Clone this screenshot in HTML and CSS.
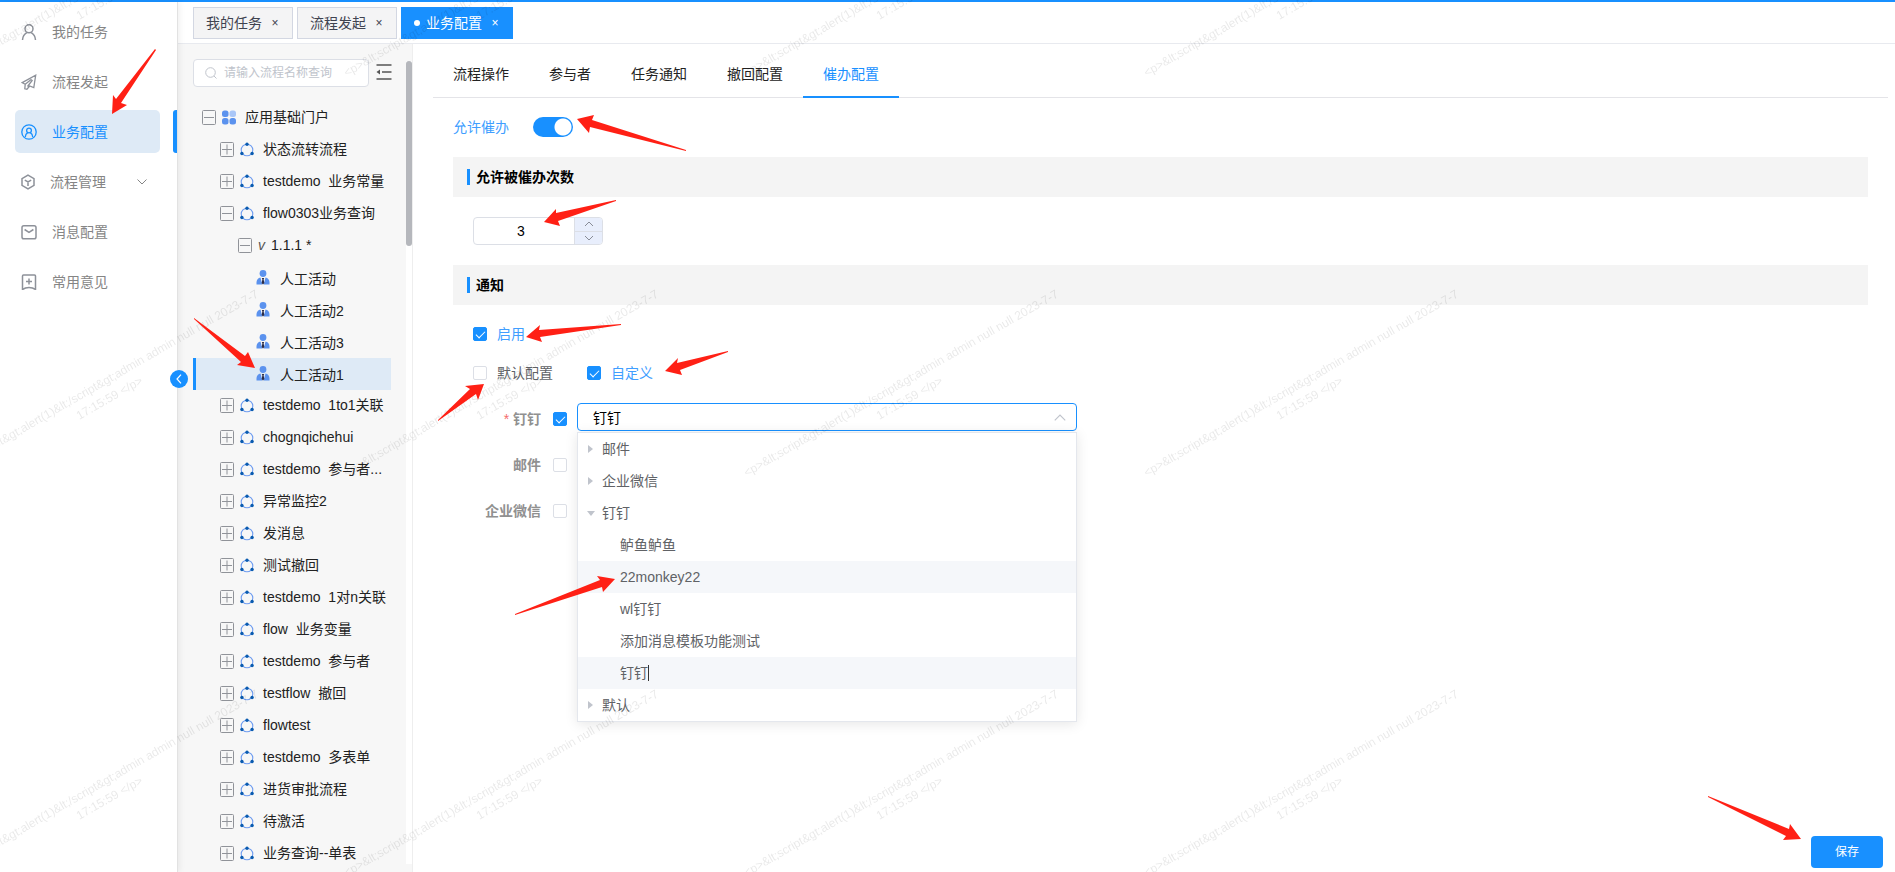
FILE: index.html
```html
<!DOCTYPE html>
<html lang="zh-CN">
<head>
    <meta charset="UTF-8">
    <meta name="viewport" content="width=device-width, initial-scale=1.0">
    <title>业务配置</title>
    <link rel="stylesheet" href="styles.css">
</head>
<body>
    <svg class="sprite" aria-hidden="true">
        <symbol id="plus" viewBox="0 0 14 15">
            <rect x="0.5" y="0.5" width="13" height="14" rx="1" fill="none" stroke="#909399"/>
            <path d="M2 7.5h10M7 2.5v10" stroke="#909399" fill="none"/>
        </symbol>
        <symbol id="minus" viewBox="0 0 14 15">
            <rect x="0.5" y="0.5" width="13" height="14" rx="1" fill="none" stroke="#909399"/>
            <path d="M2 7.5h10" stroke="#909399" fill="none"/>
        </symbol>
        <symbol id="flow" viewBox="0 0 14 14">
            <circle cx="7" cy="7.500" r="5.800" fill="none" stroke="#6f9df0" stroke-width="1.1"/>
            <circle cx="7" cy="1.800" r="1.700" fill="#0a5bb0"/>
            <circle cx="1.900" cy="11" r="1.700" fill="#0a5bb0"/>
            <circle cx="12.100" cy="11" r="1.700" fill="#0a5bb0"/>
        </symbol>
        <symbol id="person" viewBox="0 0 14 15">
            <circle cx="7" cy="3.500" r="3.400" fill="#5b92ee"/>
            <path d="M0.5 14.500v-2.500q0.500-4 4-4.500l1.800 7zM13.500 14.500v-2.500q-0.500-4-4-4.500l-1.800 7z" fill="#5b92ee"/>
            <path d="M5.800 8h2.400l-.6 1.600.8 3.400L7 14.500 5.600 13l.8-3.400z" fill="#2b2b45"/>
        </symbol>
    </svg>

    <div class="app">
        <nav class="sidebar">
            <a class="menu-item" href="#">
                <svg class="menu-icon" viewBox="0 0 16 16"><circle cx="8" cy="4.800" r="4"/><path d="M1.500 16c.2-3.600 1.600-5.800 4.300-7.400M14.500 16c-.2-3.600-1.600-5.800-4.300-7.400"/></svg>
                我的任务
            </a>
            <a class="menu-item" href="#">
                <svg class="menu-icon thin" viewBox="0 0 16 16"><path d="M1.200 8.600L14.700 1.200 12.800 13.600 8.700 12 5.900 15.200 3.800 14.800 4.200 10.300zM4.200 10.300l6.300-5M6.500 12.500L11.500 6"/></svg>
                流程发起
            </a>
            <a class="menu-item active" href="#">
                <svg class="menu-icon thin" viewBox="0 0 16 16"><circle cx="8" cy="8" r="7.200"/><circle cx="8" cy="6.500" r="2.400"/><path d="M4.300 13c.1-2.200.9-3.500 2.400-4.400M11.700 13c-.1-2.200-.9-3.500-2.400-4.400"/></svg>
                业务配置
            </a>
            <a class="menu-item submenu" href="#">
                <svg class="menu-icon" viewBox="0 0 16 16"><path d="M7 1.200l6 3.400v6.800l-6 3.400-6-3.400V4.600zM3.800 6.200L7 8l3.200-1.800M7 8v4"/></svg>
                流程管理
                <svg class="chevron" viewBox="0 0 10 6"><path d="M.5.5L5 5 9.500.5"/></svg>
            </a>
            <a class="menu-item" href="#">
                <svg class="menu-icon" viewBox="0 0 16 16"><rect x="1" y="1.700" width="14" height="13" rx="1.800"/><path d="M3.600 5.500L8 8.300l4.400-2.800"/></svg>
                消息配置
            </a>
            <a class="menu-item" href="#">
                <svg class="menu-icon" viewBox="0 0 16 16"><path d="M1.500 2q0-1 1-1h11q1 0 1 1v13.500l-3-1.500q-3.500-1-7 0l-3 1.500zM5 7.500h6M8 4.500v6"/></svg>
                常用意见
            </a>
            <button class="collapse" aria-label="收起菜单"><svg viewBox="0 0 6 10"><path d="M5 .7L1 5l4 4.300"/></svg></button>
        </nav>

        <div class="content">
            <div class="page-tabs">
                <button class="page-tab">我的任务<span class="close">×</span></button>
                <button class="page-tab">流程发起<span class="close">×</span></button>
                <button class="page-tab active"><span class="dot"></span>业务配置<span class="close">×</span></button>
            </div>

            <div class="columns">
                <aside class="tree-panel">
                    <div class="search-row">
                        <label class="search">
                            <svg viewBox="0 0 12 12"><circle cx="5.500" cy="5.500" r="4.800"/><path d="M9 9l2.500 2.500"/></svg>
                            <input type="text" placeholder="请输入流程名称查询" aria-label="请输入流程名称查询">
                        </label>
                        <button class="fold" aria-label="折叠">
                            <svg viewBox="0 0 16 16"><path d="M.5 1h15M6 8h9.500M.5 15h15"/><path class="solid" d="M.5 8L4 5.500v5z"/></svg>
                        </button>
                    </div>
                    <ul class="tree">
                        <li class="node level-0">
                            <svg class="box"><use href="#minus"/></svg>
                            <svg class="icon" viewBox="0 0 14 14"><rect width="6.500" height="6.500" rx="2.500" fill="#5b92ee"/><rect x="7.500" width="6.500" height="6.500" rx="2.500" fill="#a9c6f7"/><rect y="7.500" width="6.500" height="6.500" rx="2.500" fill="#5b92ee"/><rect x="7.500" y="7.500" width="6.500" height="6.500" rx="2.500" fill="#5b92ee"/></svg>
                            <span>应用基础门户</span>
                        </li>
                        <li class="node"><svg class="box"><use href="#plus"/></svg><svg class="icon"><use href="#flow"/></svg><span>状态流转流程</span></li>
                        <li class="node"><svg class="box"><use href="#plus"/></svg><svg class="icon"><use href="#flow"/></svg><span>testdemo  业务常量</span></li>
                        <li class="node"><svg class="box"><use href="#minus"/></svg><svg class="icon"><use href="#flow"/></svg><span>flow0303业务查询</span></li>
                        <li class="node level-2"><svg class="box"><use href="#minus"/></svg><i>v</i><span>1.1.1 *</span></li>
                        <li class="node level-3"><svg class="icon"><use href="#person"/></svg><span>人工活动</span></li>
                        <li class="node level-3"><svg class="icon"><use href="#person"/></svg><span>人工活动2</span></li>
                        <li class="node level-3"><svg class="icon"><use href="#person"/></svg><span>人工活动3</span></li>
                        <li class="node level-3 selected"><svg class="icon"><use href="#person"/></svg><span>人工活动1</span></li>
                        <li class="node"><svg class="box"><use href="#plus"/></svg><svg class="icon"><use href="#flow"/></svg><span>testdemo  1to1关联</span></li>
                        <li class="node"><svg class="box"><use href="#plus"/></svg><svg class="icon"><use href="#flow"/></svg><span>chognqichehui</span></li>
                        <li class="node"><svg class="box"><use href="#plus"/></svg><svg class="icon"><use href="#flow"/></svg><span>testdemo  参与者...</span></li>
                        <li class="node"><svg class="box"><use href="#plus"/></svg><svg class="icon"><use href="#flow"/></svg><span>异常监控2</span></li>
                        <li class="node"><svg class="box"><use href="#plus"/></svg><svg class="icon"><use href="#flow"/></svg><span>发消息</span></li>
                        <li class="node"><svg class="box"><use href="#plus"/></svg><svg class="icon"><use href="#flow"/></svg><span>测试撤回</span></li>
                        <li class="node"><svg class="box"><use href="#plus"/></svg><svg class="icon"><use href="#flow"/></svg><span>testdemo  1对n关联</span></li>
                        <li class="node"><svg class="box"><use href="#plus"/></svg><svg class="icon"><use href="#flow"/></svg><span>flow  业务变量</span></li>
                        <li class="node"><svg class="box"><use href="#plus"/></svg><svg class="icon"><use href="#flow"/></svg><span>testdemo  参与者</span></li>
                        <li class="node"><svg class="box"><use href="#plus"/></svg><svg class="icon"><use href="#flow"/></svg><span>testflow  撤回</span></li>
                        <li class="node"><svg class="box"><use href="#plus"/></svg><svg class="icon"><use href="#flow"/></svg><span>flowtest</span></li>
                        <li class="node"><svg class="box"><use href="#plus"/></svg><svg class="icon"><use href="#flow"/></svg><span>testdemo  多表单</span></li>
                        <li class="node"><svg class="box"><use href="#plus"/></svg><svg class="icon"><use href="#flow"/></svg><span>进货审批流程</span></li>
                        <li class="node"><svg class="box"><use href="#plus"/></svg><svg class="icon"><use href="#flow"/></svg><span>待激活</span></li>
                        <li class="node"><svg class="box"><use href="#plus"/></svg><svg class="icon"><use href="#flow"/></svg><span>业务查询--单表</span></li>
                    </ul>
                    <div class="scroll-track"><div class="scroll-thumb"></div></div>
                </aside>

                <main class="main">
                    <div class="tabs" role="tablist">
                        <button class="tab" role="tab">流程操作</button>
                        <button class="tab" role="tab">参与者</button>
                        <button class="tab" role="tab">任务通知</button>
                        <button class="tab" role="tab">撤回配置</button>
                        <button class="tab active" role="tab" aria-selected="true">催办配置</button>
                    </div>

                    <div class="panel">
                        <div class="switch-row">
                            <label for="allow">允许催办</label>
                            <input class="switch" type="checkbox" id="allow" role="switch" checked>
                        </div>

                        <h2 class="section-title">允许被催办次数</h2>
                        <div class="number">
                            <input type="text" inputmode="numeric" value="3" aria-label="允许被催办次数">
                            <div class="steps">
                                <button aria-label="增加"><svg viewBox="0 0 10 6"><path d="M1 5l4-4 4 4"/></svg></button>
                                <button aria-label="减少"><svg viewBox="0 0 10 6"><path d="M1 1l4 4 4-4"/></svg></button>
                            </div>
                        </div>

                        <h2 class="section-title">通知</h2>
                        <div class="notify">
                            <div class="checks">
                                <label class="check"><input type="checkbox" checked><span>启用</span></label>
                            </div>
                            <div class="checks">
                                <label class="check"><input type="checkbox"><span>默认配置</span></label>
                                <label class="check"><input type="checkbox" checked><span>自定义</span></label>
                            </div>
                        </div>

                        <div class="channels">
                            <div class="channel">
                                <label class="required" for="dingtalk">钉钉</label>
                                <input type="checkbox" id="dingtalk" checked>
                                <div class="tree-select">
                                    <input type="text" role="combobox" aria-expanded="true" aria-label="钉钉模板" value="钉钉">
                                    <svg class="select-arrow" viewBox="0 0 10 6"><path d="M.5 5.500L5 1l4.500 4.500"/></svg>
                                    <ul class="dropdown">
                                        <li class="option"><span class="caret"></span>邮件</li>
                                        <li class="option"><span class="caret"></span>企业微信</li>
                                        <li class="option"><span class="caret open"></span>钉钉</li>
                                        <li class="option child">鲈鱼鲈鱼</li>
                                        <li class="option child hover">22monkey22</li>
                                        <li class="option child">wl钉钉</li>
                                        <li class="option child">添加消息模板功能测试</li>
                                        <li class="option child hover"><span class="typing">钉钉</span></li>
                                        <li class="option"><span class="caret"></span>默认</li>
                                    </ul>
                                </div>
                            </div>
                            <div class="channel">
                                <label for="mail">邮件</label>
                                <input type="checkbox" id="mail">
                            </div>
                            <div class="channel">
                                <label for="wecom">企业微信</label>
                                <input type="checkbox" id="wecom">
                            </div>
                        </div>
                    </div>

                    <div class="footer"><button class="save">保存</button></div>
                </main>
            </div>
        </div>
    </div>

    <div class="watermark" id="watermark" aria-hidden="true"></div>

    <svg class="arrows" aria-hidden="true">
        <polygon points="155,49 116,99 113,95 112,114 127,105 121,103 156,50"/>
        <polygon points="686,150 592,120 594,115 577,119 589,133 590,127 686,151"/>
        <polygon points="616,200 556,213 556,209 544,222 560,226 558,221 616,201"/>
        <polygon points="621,324 539,330 540,325 526,337 542,342 540,337 621,325"/>
        <polygon points="728,351 677,363 678,358 665,371 682,375 680,370 728,352"/>
        <polygon points="438,420 470,389 465,386 484,384 478,400 476,394 438,421"/>
        <polygon points="194,318 245,356 248,352 255,368 237,365 241,362 194,319"/>
        <polygon points="515,614 600,580 597,576 615,579 603,592 602,587 515,615"/>
        <polygon points="1708,796 1789,829 1790,824 1801,839 1783,840 1786,836 1708,797"/>
    </svg>

    <script>
        const watermark = document.getElementById('watermark');
        const lines = ['<p>&lt;script&gt;alert(1)&lt;/script&gt;admin admin null null 2023-7-7', '17:15:59 </p>'];

        for (let i = 0; i < 12; i++) {
            let mark = document.createElement('div');
            mark.className = 'mark';
            mark.innerText = lines.join('\n');
            watermark.appendChild(mark);
        }
    </script>
</body>
</html>
```

FILE: styles.css
```css
* {
    box-sizing: border-box;
}
body {
    margin: 0;
    font-family: "Liberation Sans", "Noto Sans CJK SC", sans-serif;
    font-size: 14px;
    line-height: 20px;
    color: #222222;
    overflow: hidden;
}
button, input {
    font: inherit;
    color: inherit;
    margin: 0;
    padding: 0;
    border: none;
    background: none;
}
button {
    cursor: pointer;
}
ul {
    list-style: none;
    margin: 0;
    padding: 0;
}
svg {
    flex: none;
    fill: none;
    stroke: currentColor;
}
.sprite {
    display: none;
}
.app {
    display: flex;
    height: 100vh;
    border-top: 2px solid #1890ff;
}

/* left menu */
.sidebar {
    position: relative;
    z-index: 2;
    flex: none;
    width: 178px;
    padding-top: 8px;
    background-color: #ffffff;
    border-right: 1px solid #e2e2e2;
    box-shadow: 2px 0 6px rgba(0, 0, 0, 0.06);
}
.menu-item {
    position: relative;
    display: flex;
    align-items: center;
    gap: 15px;
    height: 43px;
    margin: 0 17px 7px 15px;
    padding-left: 6px;
    border-radius: 5px;
    color: #858585;
    text-decoration: none;
}
.menu-icon {
    width: 16px;
    height: 16px;
    stroke-width: 1.5;
    color: #8d9199;
}
.menu-icon.thin {
    stroke-width: 1.3;
}
.submenu {
    gap: 13px;
}
.chevron {
    width: 10px;
    height: 6px;
    margin-left: auto;
    margin-right: 13px;
}
.menu-item.active {
    background-color: #deeaf6;
    color: #1890ff;
}
.menu-item.active .menu-icon {
    color: #1890ff;
}
.menu-item.active::after {
    content: "";
    position: absolute;
    top: 0;
    right: -17px;
    width: 4px;
    height: 100%;
    border-radius: 3px 0 0 3px;
    background-color: #1890ff;
}
.collapse {
    position: absolute;
    top: 368px;
    right: -11px;
    display: flex;
    align-items: center;
    justify-content: center;
    width: 18px;
    height: 18px;
    border-radius: 50%;
    background-color: #1890ff;
    color: #ffffff;
}
.collapse svg {
    width: 6px;
    height: 10px;
    stroke-width: 1.2;
}

/* page tabs */
.content {
    flex: 1;
    min-width: 0;
    display: flex;
    flex-direction: column;
}
.page-tabs {
    flex: none;
    display: flex;
    gap: 4px;
    padding: 5px 15px 4px;
    border-bottom: 1px solid #e8eaef;
}
.page-tab {
    display: flex;
    align-items: center;
    height: 32px;
    padding: 0 12px;
    border: 1px solid #d3d7e2;
    background-color: #f4f4f5;
    color: #3f4350;
}
.page-tab .close {
    width: 18px;
    padding-left: 8px;
    font-size: 12px;
}
.page-tab .dot {
    width: 6px;
    height: 6px;
    margin-right: 6px;
    border-radius: 50%;
    background-color: #ffffff;
}
.page-tab.active {
    background-color: #1890ff;
    border-color: #1890ff;
    color: #ffffff;
}
.columns {
    flex: 1;
    display: flex;
    min-height: 0;
}

/* process tree */
.tree-panel {
    position: relative;
    flex: none;
    width: 235px;
    padding: 15px 21px 0 15px;
    background-color: #f7f7f7;
    border-right: 1px solid #eeeeee;
    overflow: hidden;
}
.search-row {
    display: flex;
    align-items: flex-start;
    gap: 7px;
    margin-bottom: 15px;
}
.search {
    flex: none;
    display: flex;
    align-items: center;
    gap: 7px;
    width: 176px;
    height: 28px;
    padding-left: 11px;
    border: 1px solid #dcdfe6;
    border-radius: 4px;
    background-color: #ffffff;
    color: #c0c4cc;
}
.search svg {
    width: 12px;
    height: 12px;
}
.search input {
    flex: 1;
    min-width: 0;
    font-size: 12px;
    outline: none;
}
.search input::placeholder {
    color: #c0c4cc;
}
.fold {
    display: flex;
    padding-top: 5px;
    color: #555555;
}
.fold svg {
    width: 16px;
    height: 16px;
    stroke-width: 1.6;
}
.fold .solid {
    fill: #555555;
    stroke: none;
}
.node {
    display: flex;
    align-items: center;
    height: 32px;
    padding: 0 0 2px 27px;
    white-space: pre;
}
.node .box {
    width: 14px;
    height: 15px;
    margin-right: 6px;
}
.node .icon {
    width: 14px;
    height: 15px;
    margin-right: 9px;
    stroke: none;
}
.node i {
    width: 13px;
    color: #555555;
}
.node.level-0 {
    padding-left: 9px;
}
.node.level-2 {
    padding-left: 45px;
}
.node.level-3 {
    padding: 2px 0 0 63px;
}
.node.level-3 .icon {
    margin: 0 10px 3px 0;
}
.node.selected {
    background-color: #deeaf6;
    box-shadow: inset 3px 0 #1890ff;
}
.scroll-track {
    position: absolute;
    top: 17px;
    right: 0;
    bottom: 8px;
    width: 6px;
    background-color: #ffffff;
}
.scroll-thumb {
    height: 185px;
    border-radius: 3px;
    background-color: #b5b7bc;
}

/* settings */
.main {
    flex: 1;
    min-width: 0;
    display: flex;
    flex-direction: column;
    padding: 6px 7px 4px 20px;
}
.tabs {
    display: flex;
    border-bottom: 1px solid #e4e4e8;
}
.tab {
    height: 48px;
    margin-bottom: -1px;
    padding: 2px 20px 0;
    border-bottom: 2px solid transparent;
}
.tab.active {
    border-color: #1890ff;
    color: #1890ff;
}
.panel {
    padding: 19px 20px 0;
}
.switch-row {
    display: flex;
    align-items: center;
    gap: 24px;
    margin-bottom: 20px;
    color: #409eff;
}
.switch {
    appearance: none;
    width: 40px;
    height: 20px;
    border-radius: 10px;
    background: radial-gradient(circle at 30px 10px, #ffffff 8px, #1890ff 9px);
}
.section-title {
    display: flex;
    align-items: center;
    gap: 6px;
    height: 40px;
    margin: 0;
    padding-left: 14px;
    background-color: #f4f4f4;
    color: #000000;
    font-size: 14px;
    font-weight: 700;
}
.section-title::before {
    content: "";
    width: 3px;
    height: 16px;
    background-color: #1890ff;
}
.number {
    display: flex;
    width: 130px;
    height: 28px;
    margin: 20px;
    border: 1px solid #dcdfe6;
    border-radius: 4px;
    overflow: hidden;
    color: #000000;
}
.number input {
    flex: 1;
    min-width: 0;
    padding-right: 6px;
    text-align: center;
}
.steps {
    display: flex;
    flex-direction: column;
    width: 28px;
    border-left: 1px solid #dcdfe6;
    background-color: #e8eefc;
    color: #888c96;
}
.steps button {
    flex: 1;
    display: flex;
    align-items: center;
    justify-content: center;
}
.steps button + button {
    border-top: 1px solid #dcdfe6;
}
.steps svg {
    width: 10px;
    height: 6px;
}
.notify {
    display: flex;
    flex-direction: column;
    gap: 19px;
    padding: 19px 20px 0;
}
.checks {
    display: flex;
    gap: 34px;
}
.check {
    display: flex;
    align-items: center;
    gap: 10px;
    color: #606266;
}
.check:has(:checked) {
    color: #409eff;
}
.check input, .channel > input {
    appearance: none;
    flex: none;
    width: 14px;
    height: 14px;
    border: 1px solid #dcdfe6;
    border-radius: 2px;
    background-color: #ffffff;
}
.check input:checked, .channel > input:checked {
    display: flex;
    justify-content: center;
    border-color: #1890ff;
    background-color: #1890ff;
}
.check input:checked::after, .channel > input:checked::after {
    content: "";
    width: 4px;
    height: 8px;
    margin-top: 1px;
    border: solid #ffffff;
    border-width: 0 1px 1px 0;
    transform: rotate(45deg);
}
.channels {
    display: flex;
    flex-direction: column;
    gap: 18px;
    padding-top: 22px;
}
.channel {
    display: flex;
    align-items: center;
    height: 28px;
    color: #909090;
}
.channel > label {
    width: 88px;
    margin-right: 12px;
    text-align: right;
    font-weight: 700;
}
.required::before {
    content: "* ";
    color: #f56c6c;
    font-weight: 400;
}
.tree-select {
    position: relative;
    width: 500px;
    height: 28px;
    margin: -4px 0 0 10px;
    color: #606266;
}
.tree-select input {
    width: 100%;
    height: 28px;
    padding: 0 30px 0 15px;
    border: 1px solid #1890ff;
    border-radius: 4px;
    color: #000000;
    outline: none;
}
.select-arrow {
    position: absolute;
    top: 11px;
    right: 11px;
    width: 12px;
    height: 7px;
    color: #c0c4cc;
}
.dropdown {
    position: absolute;
    top: 29px;
    left: 0;
    width: 100%;
    border: 1px solid #e4e7ed;
    background-color: #ffffff;
    box-shadow: 0 2px 12px rgba(0, 0, 0, 0.1);
}
.option {
    display: flex;
    align-items: center;
    height: 32px;
    padding-left: 10px;
}
.option.child {
    padding-left: 42px;
}
.option.hover {
    background-color: #f5f7fa;
}
.caret {
    width: 5px;
    margin-right: 9px;
    border: solid transparent;
    border-width: 4px 0 4px 5px;
    border-left-color: #c0c4cc;
}
.caret.open {
    width: 8px;
    margin: 0 7px 0 -1px;
    border-width: 5px 4px 0;
    border-color: #c0c4cc transparent;
}
.typing {
    height: 16px;
    line-height: 16px;
    border-right: 1px solid #333333;
}
.footer {
    display: flex;
    justify-content: flex-end;
    margin-top: auto;
    padding-right: 5px;
}
.save {
    width: 72px;
    height: 32px;
    border-radius: 4px;
    background-color: #1890ff;
    color: #ffffff;
    font-size: 12px;
}

/* overlays */
.watermark {
    position: fixed;
    top: -209px;
    left: -95px;
    z-index: 10;
    display: grid;
    grid-template-columns: repeat(4, 400px);
    grid-auto-rows: 400px;
    place-items: center;
    pointer-events: none;
}
.mark {
    transform: rotate(-30deg);
    font-size: 12px;
    line-height: 17px;
    text-align: center;
    white-space: nowrap;
    color: rgba(0, 0, 0, 0.09);
}
.arrows {
    position: fixed;
    top: 0;
    left: 0;
    z-index: 11;
    width: 100%;
    height: 100%;
    fill: #ff2015;
    stroke: none;
    pointer-events: none;
}
```
